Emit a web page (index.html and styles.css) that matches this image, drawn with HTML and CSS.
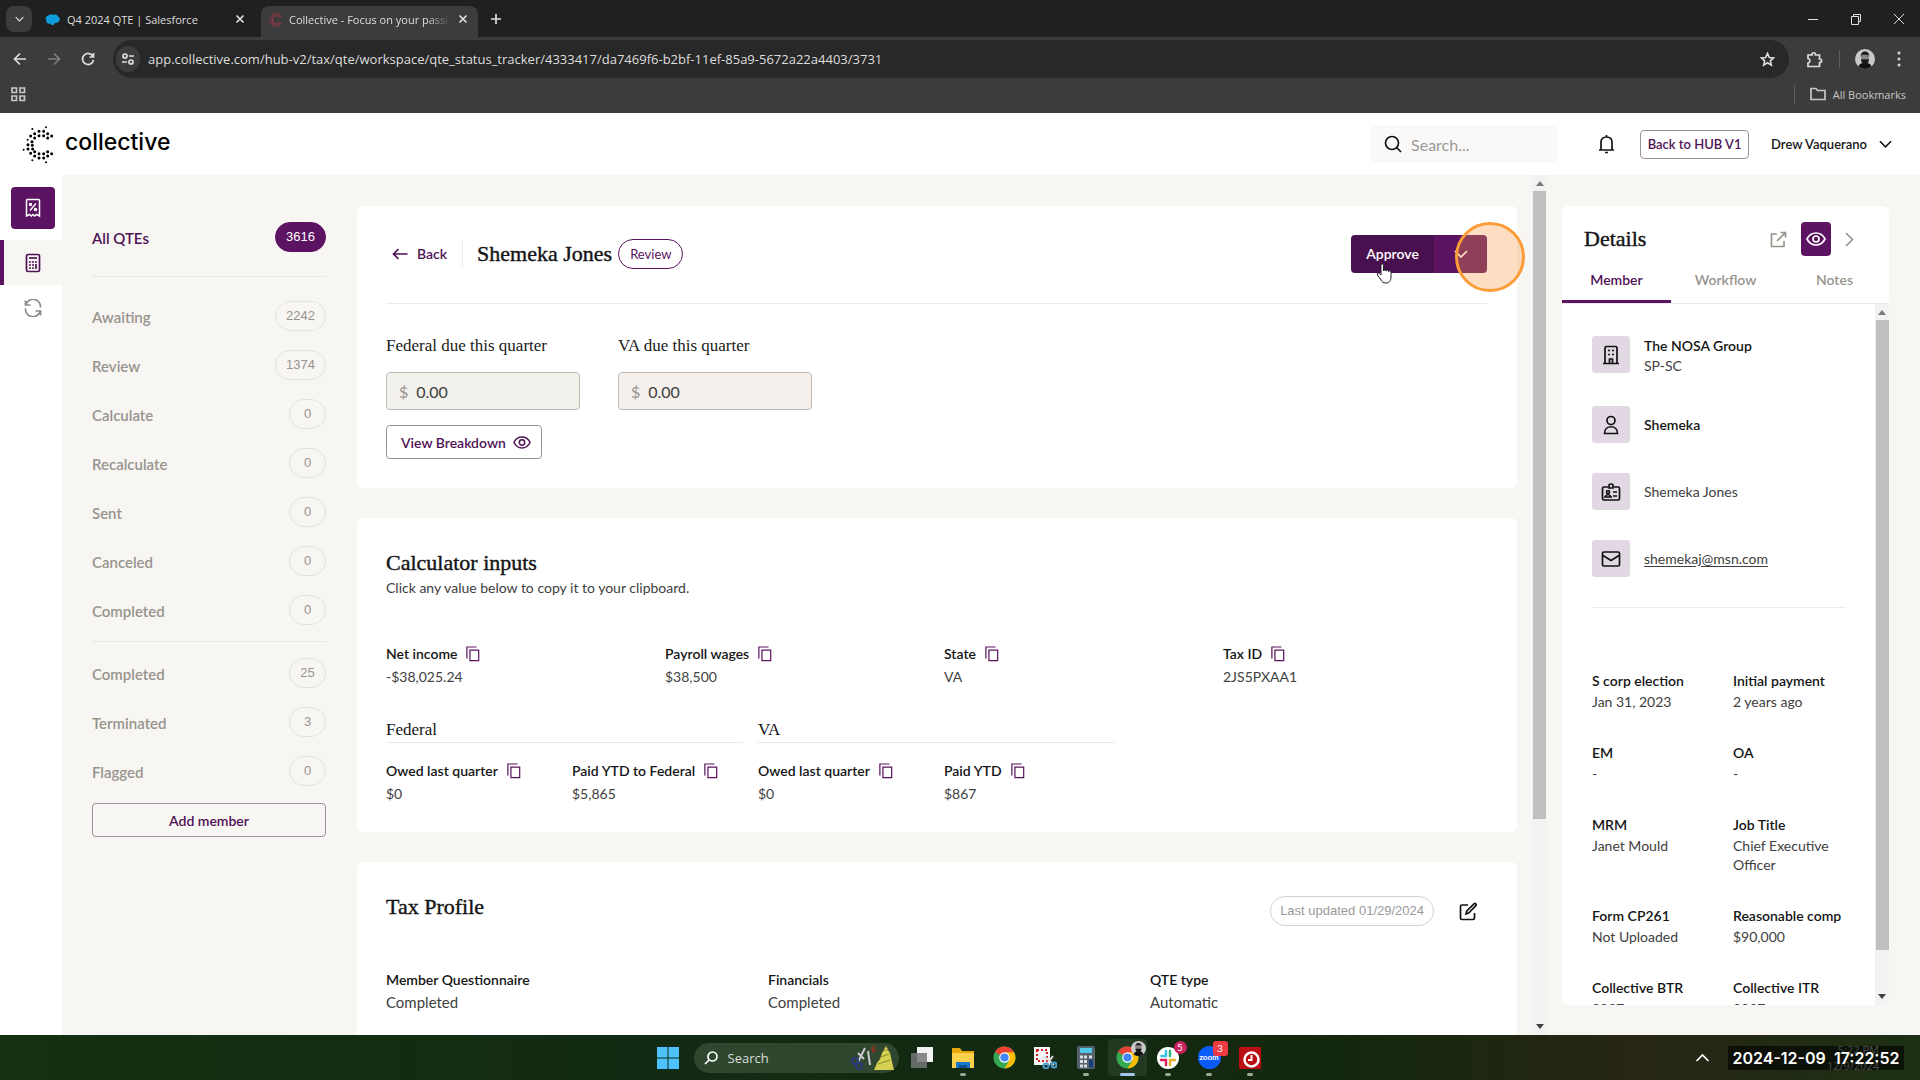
FILE: index.html
```html
<!DOCTYPE html>
<html lang="en">
<head>
  <meta charset="UTF-8">
  <meta name="viewport" content="width=device-width, initial-scale=1.0">
  <title>Collective - Focus on your passion</title>
  <link rel="stylesheet" href="styles.css">
</head>
<body>

  <!-- Shared icons -->
  <svg class="sprite" aria-hidden="true">
    <symbol id="copy" viewBox="0 0 16 18"><path d="M1 14V1h11M4.500 4.500h10v12h-10z"/></symbol>
    <symbol id="eye" viewBox="0 0 20 14"><path d="M1 7c2-4 5.200-6 9-6s7 2 9 6c-2 4-5.200 6-9 6S3 11 1 7z"/><circle cx="10" cy="7" r="3"/></symbol>
    <symbol id="close" viewBox="0 0 10 10"><path d="M1.500 1.500l7 7m0-7l-7 7"/></symbol>
    <symbol id="down" viewBox="0 0 14 8"><path d="M1 1l6 6 6-6"/></symbol>
    <symbol id="search" viewBox="0 0 18 18"><circle cx="8" cy="8" r="6.500"/><path d="M12.500 12.500L17 17"/></symbol>
    <symbol id="dots" viewBox="20 12 96 120">
      <path d="M51 30h0M92 25h0M37 62h0M25 92h0M51 124h0M92 130h0" stroke-width="6"/>
      <path d="M71 37h0M85 37h0M58 44h0M97 44h0M46 51h0M109 51h0M71 50h0M85 50h0M58 57h0M97 57h0M50 68h0M38 77h0M51 79h0M38 90h0M52 90h0M46 103h0M58 98h0M97 98h0M109 104h0M71 104h0M85 104h0M58 111h0M97 111h0M71 117h0M85 117h0" stroke-width="9"/>
    </symbol>
    <symbol id="face" viewBox="0 0 20 20">
      <circle cx="10" cy="10" r="10" fill="#c9c9c9"/>
      <path d="M3.500 17.500c1-3 3-3.500 6.500-3.500s5.500.5 6.500 3.500A10 10 0 0 1 10 20a10 10 0 0 1-6.500-2.500z" fill="#111"/>
      <ellipse cx="10" cy="8.500" rx="4" ry="5" fill="#8b8581"/>
      <path d="M5.800 8C5.500 4 7.500 2.500 10 2.500S14.500 4 14.200 8l-1-2.200H6.800zM6 9.500c1 1.500 2 .8 4 .8s3 .7 4-.8c0 4-1.500 6-4 6s-4-2-4-6z" fill="#1c1a19"/>
    </symbol>
    <symbol id="chrome" viewBox="0 0 24 24">
      <circle cx="12" cy="12" r="11.500" fill="#34a853"/>
      <path d="M12 12L2 6.300A11.500 11.500 0 0 1 22 6.500z" fill="#ea4335"/>
      <path d="M12 6.500h10A11.500 11.500 0 0 1 12 23.500l5-8.500z" fill="#fbbc04"/>
      <circle cx="12" cy="12" r="5.500" fill="#fff"/><circle cx="12" cy="12" r="4.300" fill="#4285f4"/>
    </symbol>
  </svg>

  <!-- Browser -->
  <header class="browser">
    <div class="tabs">
      <button class="tab-list" aria-label="Search tabs"><svg class="icon" width="9" height="6"><use href="#down"/></svg></button>
      <div class="tab">
        <svg width="15" height="13" viewBox="0 0 15 13"><path d="M3.500 2.500C5 .5 7 1 8 2c2-1 4-.5 5 1.500 2.500 1 2.500 5-.5 6-1 .8-2 .6-2.700.4C8.500 13 6 12.500 5.500 10.500 2.500 11.500.5 9 1.500 7-.3 5.500 1 3 3.500 2.500z" fill="#0d9dda"/></svg>
        <span class="tab-title">Q4 2024 QTE | Salesforce</span>
        <button class="tab-close" aria-label="Close tab"><svg class="icon" width="10" height="10"><use href="#close"/></svg></button>
      </div>
      <div class="tab current">
        <svg width="14" height="18" class="logo-dots red"><use href="#dots"/></svg>
        <span class="tab-title">Collective - Focus on your passi</span>
        <button class="tab-close" aria-label="Close tab"><svg class="icon" width="10" height="10"><use href="#close"/></svg></button>
      </div>
      <button class="new-tab" aria-label="New tab"><svg class="icon" width="12" height="12" viewBox="0 0 12 12"><path d="M6 1v10M1 6h10"/></svg></button>
      <div class="window-buttons">
        <button aria-label="Minimize"><svg class="icon thin" width="12" height="12" viewBox="0 0 12 12"><path d="M1 6.500h10"/></svg></button>
        <button aria-label="Restore"><svg class="icon thin" width="12" height="12" viewBox="0 0 12 12"><path d="M1.500 3.500h7v8h-7zM3.500 3V1.500h7v7H9"/></svg></button>
        <button aria-label="Close"><svg class="icon thin" width="12" height="12" viewBox="0 0 12 12"><path d="M1 1l10 10m0-10L1 11"/></svg></button>
      </div>
    </div>
    <div class="toolbar">
      <button aria-label="Back"><svg class="icon" width="14" height="14" viewBox="0 0 14 14"><path d="M13 7H2m5-5.500L1.500 7 7 12.500"/></svg></button>
      <button class="off" aria-label="Forward"><svg class="icon" width="14" height="14" viewBox="0 0 14 14"><path d="M1 7h11M7 1.500L12.500 7 7 12.500"/></svg></button>
      <button aria-label="Reload"><svg class="icon" width="14" height="14" viewBox="0 0 14 14"><path d="M12 4.500A5.500 5.500 0 1 0 12.500 8M12.500 1v4h-4"/></svg></button>
      <div class="address">
        <span class="site-info"><svg class="icon" width="14" height="14" viewBox="0 0 14 14"><circle cx="4" cy="4" r="2"/><circle cx="10" cy="10" r="2"/><path d="M8 4h5M1 10h5"/></svg></span>
        <input id="url" type="text" aria-label="Address" value="app.collective.com/hub-v2/tax/qte/workspace/qte_status_tracker/4333417/da7469f6-b2bf-11ef-85a9-5672a22a4403/3731">
        <button aria-label="Bookmark this tab"><svg class="icon" width="15" height="15" viewBox="0 0 16 16"><path d="M8 1.500l1.900 4.400 4.600.4-3.500 3.100 1.100 4.600L8 11.500 3.900 14 5 9.400 1.500 6.300l4.600-.4z"/></svg></button>
      </div>
      <button class="extensions" aria-label="Extensions"><svg class="icon" width="17" height="17" viewBox="0 0 17 17"><path d="M2 4h4c0-3 3.500-3 3.500 0h4v4c2.800 0 2.800 3.500 0 3.500V15.500H2V12c2.500-.5 2.500-4 0-4.500z"/></svg></button>
      <span class="bar"></span>
      <button aria-label="Profile"><svg width="20" height="20"><use href="#face"/></svg></button>
      <button class="more" aria-label="More"><svg width="4" height="16" viewBox="0 0 4 16" fill="#d5d5d5"><circle cx="2" cy="2" r="1.500"/><circle cx="2" cy="8" r="1.500"/><circle cx="2" cy="14" r="1.500"/></svg></button>
    </div>
    <div class="bookmarks">
      <svg class="icon" width="15" height="15" viewBox="0 0 15 15"><path d="M1 1h4.500v4.500H1zM9 1h4.500v4.500H9zM1 9h4.500v4.500H1zM9 9h4.500v4.500H9z"/></svg>
      <a href="#" class="all-bookmarks"><svg class="icon" width="16" height="14" viewBox="0 0 16 14"><path d="M1 12.500v-11h5l1.500 2H15v9z"/></svg>All Bookmarks</a>
    </div>
  </header>

  <!-- App header -->
  <div class="app-header">
    <a href="#" class="brand">
      <svg class="logo-dots" width="32" height="40"><use href="#dots"/></svg>
      collective
    </a>
    <label class="search-box"><svg class="icon" width="18" height="18"><use href="#search"/></svg><input type="text" placeholder="Search..." aria-label="Search"></label>
    <button class="bell" aria-label="Notifications"><svg class="icon" width="17" height="20" viewBox="0 0 17 20"><path d="M1 16h15M3 16V8.500C3 5 5 3 8.500 3S14 5 14 8.500V16M8.500 3V1M7 18.500h3"/></svg></button>
    <button class="btn back-v1">Back to HUB V1</button>
    <button class="user">Drew Vaquerano <svg class="icon" width="13" height="8"><use href="#down"/></svg></button>
  </div>

  <div class="app">
    <nav class="rail">
      <a href="#" class="rail-home" aria-label="Tax"><svg class="icon" width="16" height="20" viewBox="0 0 16 20"><path d="M1.500 18V2.500q0-1 1-1h11q1 0 1 1V18l-3-1.500-1.800 1.500L8 16.500 6.300 18l-1.800-1.500zM11 5.500l-6 7"/><circle cx="5.500" cy="6.500" r="1"/><circle cx="10.500" cy="11.500" r="1"/></svg></a>
      <a href="#" class="rail-item active" aria-label="Calculator"><svg class="icon" width="16" height="20" viewBox="0 0 16 20"><rect x="1.500" y="1.500" width="13" height="17" rx="1.500"/><path d="M4 5h8"/><path d="M4 9h8M4 12h5M4 15h5" stroke-dasharray="2 1"/><path d="M11 11v5"/></svg></a>
      <a href="#" class="rail-item" aria-label="Sync"><svg class="icon" width="18" height="18" viewBox="0 0 18 18"><path d="M1.500 1.500v4.500h5M1.800 5.800A7.500 7.500 0 0 1 16.500 8.500M16.500 16.500V12h-5M16.200 12.200A7.500 7.500 0 0 1 1.500 9.500"/></svg></a>
    </nav>

    <aside class="sidebar">
      <a href="#" class="status all">All QTEs <span>3616</span></a>
      <div class="group">
        <a href="#" class="status">Awaiting <span>2242</span></a>
        <a href="#" class="status">Review <span>1374</span></a>
        <a href="#" class="status">Calculate <span>0</span></a>
        <a href="#" class="status">Recalculate <span>0</span></a>
        <a href="#" class="status">Sent <span>0</span></a>
        <a href="#" class="status">Canceled <span>0</span></a>
        <a href="#" class="status">Completed <span>0</span></a>
      </div>
      <div class="group second">
        <a href="#" class="status">Completed <span>25</span></a>
        <a href="#" class="status">Terminated <span>3</span></a>
        <a href="#" class="status">Flagged <span>0</span></a>
      </div>
      <button class="btn add-member">Add member</button>
    </aside>

    <main class="main">
      <section class="card estimate">
        <div class="card-head">
          <a href="#" class="back"><svg class="icon" width="16" height="12" viewBox="0 0 16 12"><path d="M15.500 6H1.500m5-5l-5 5 5 5"/></svg>Back</a>
          <h1>Shemeka Jones</h1>
          <span class="pill">Review</span>
          <div class="approve">
            <button class="approve-main">Approve</button>
            <button class="approve-more" aria-label="More actions"><svg class="icon" width="14" height="8"><use href="#down"/></svg></button>
            <span class="click-ring"></span>
            <svg class="cursor" width="18" height="22" viewBox="0 0 18 22"><path d="M5 12V2.500c0-2 2.500-2 2.500 0V8c0-1.500 2.500-1.500 2.500 0 0-1.300 2.500-1.300 2.500.5 0-1 2.500-1 2.500 1V14c0 4-2 6-5 6-3 0-4-1-5-3l-3.500-5c-1-1.800.8-2.500 2-1.300z" fill="#fff" stroke="#222"/></svg>
          </div>
        </div>
        <div class="due">
          <div class="field">
            <label for="federal">Federal due this quarter</label>
            <div class="money"><span>$</span><input id="federal" type="text" value="0.00"></div>
          </div>
          <div class="field">
            <label for="va">VA due this quarter</label>
            <div class="money va"><span>$</span><input id="va" type="text" value="0.00"></div>
          </div>
        </div>
        <button class="btn breakdown">View Breakdown <svg class="icon" width="18" height="13"><use href="#eye"/></svg></button>
      </section>

      <section class="card inputs">
        <h2>Calculator inputs</h2>
        <p>Click any value below to copy it to your clipboard.</p>
        <div class="cols-4">
          <div class="value"><b>Net income <svg class="icon" width="14" height="16"><use href="#copy"/></svg></b>-$38,025.24</div>
          <div class="value"><b>Payroll wages <svg class="icon" width="14" height="16"><use href="#copy"/></svg></b>$38,500</div>
          <div class="value"><b>State <svg class="icon" width="14" height="16"><use href="#copy"/></svg></b>VA</div>
          <div class="value"><b>Tax ID <svg class="icon" width="14" height="16"><use href="#copy"/></svg></b>2JS5PXAA1</div>
        </div>
        <div class="cols-6">
          <h3>Federal</h3>
          <h3>VA</h3>
          <i></i>
          <div class="value"><b>Owed last quarter <svg class="icon" width="14" height="16"><use href="#copy"/></svg></b>$0</div>
          <div class="value"><b>Paid YTD to Federal <svg class="icon" width="14" height="16"><use href="#copy"/></svg></b>$5,865</div>
          <div class="value"><b>Owed last quarter <svg class="icon" width="14" height="16"><use href="#copy"/></svg></b>$0</div>
          <div class="value"><b>Paid YTD <svg class="icon" width="14" height="16"><use href="#copy"/></svg></b>$867</div>
        </div>
      </section>

      <section class="card profile">
        <div class="profile-head">
          <h2>Tax Profile</h2>
          <span class="updated">Last updated 01/29/2024</span>
          <button aria-label="Edit"><svg class="icon" width="19" height="19" viewBox="0 0 19 19"><path d="M9 3H3q-1.500 0-1.500 1.500V16q0 1.500 1.500 1.500h11q1.500 0 1.500-1.500v-5M7 12l.8-3L15 1.800q1-.8 1.800 0t0 1.900L9.700 11z"/></svg></button>
        </div>
        <div class="cols-3">
          <div class="value"><b>Member Questionnaire</b>Completed</div>
          <div class="value"><b>Financials</b>Completed</div>
          <div class="value"><b>QTE type</b>Automatic</div>
        </div>
      </section>
    </main>

    <div class="scrollbar main-scroll"><svg width="8" height="5" viewBox="0 0 8 5"><path d="M0 5l4-5 4 5z"/></svg><span></span><svg class="end" width="8" height="5" viewBox="0 0 8 5"><path d="M0 0l4 5 4-5z"/></svg></div>

    <aside class="details">
      <div class="details-head">
        <h2>Details</h2>
        <button aria-label="Open in new window"><svg class="icon" width="17" height="17" viewBox="0 0 17 17"><path d="M7 3H1.500v12.500H14V10M10.500 1.500h5v5M15 2L7 10"/></svg></button>
        <button class="watch" aria-label="Watch"><svg class="icon" width="20" height="14"><use href="#eye"/></svg></button>
        <button aria-label="Collapse"><svg class="icon" width="9" height="15" viewBox="0 0 9 15"><path d="M1 1l6.500 6.500L1 14"/></svg></button>
      </div>
      <div class="details-tabs">
        <a href="#" class="active">Member</a>
        <a href="#">Workflow</a>
        <a href="#">Notes</a>
      </div>
      <div class="details-body">
        <div class="details-content">
          <div class="contact"><span class="tile"><svg class="icon" width="18" height="20" viewBox="0 0 18 20"><path d="M1 18.500h16M3 18V3q0-1.500 1.500-1.500h9Q15 1.500 15 3v15M7.500 18v-4h3v4"/><path d="M6 5.500h6.500M6 9.500h6.500" stroke-dasharray="2 2"/></svg></span><div><b>The NOSA Group</b><br>SP-SC</div></div>
          <div class="contact"><span class="tile"><svg class="icon" width="16" height="20" viewBox="0 0 16 20"><circle cx="8" cy="5.500" r="4"/><path d="M1.500 18.500c0-9 13-9 13 0z"/></svg></span><b>Shemeka</b></div>
          <div class="contact"><span class="tile"><svg class="icon" width="20" height="18" viewBox="0 0 20 18"><path d="M7 4H3Q1.500 4 1.500 5.500v10Q1.500 17 3 17h14q1.500 0 1.500-1.500v-10Q18.500 4 17 4h-4M8 5V2.500q0-1.500 2-1.500t2 1.500V5zM12 9h4M12 13h4M4 14q3-5 6 0z"/><circle cx="7" cy="9" r="1.500"/></svg></span>Shemeka Jones</div>
          <div class="contact"><span class="tile"><svg class="icon" width="20" height="16" viewBox="0 0 20 16"><rect x="1.500" y="1" width="17" height="14" rx="1.500"/><path d="M2 4.500l8 5 8-5"/></svg></span><a href="mailto:shemekaj@msn.com">shemekaj@msn.com</a></div>
          <div class="facts">
            <div><b>S corp election</b>Jan 31, 2023</div>
            <div><b>Initial payment</b>2 years ago</div>
            <div><b>EM</b>-</div>
            <div><b>OA</b>-</div>
            <div><b>MRM</b>Janet Mould</div>
            <div><b>Job Title</b>Chief Executive Officer</div>
            <div><b>Form CP261</b>Not Uploaded</div>
            <div><b>Reasonable comp</b>$90,000</div>
            <div><b>Collective BTR</b>2027</div>
            <div><b>Collective ITR</b>2027</div>
          </div>
        </div>
        <div class="scrollbar details-scroll"><svg width="8" height="5" viewBox="0 0 8 5"><path d="M0 5l4-5 4 5z"/></svg><span></span><svg class="end" width="8" height="5" viewBox="0 0 8 5"><path d="M0 0l4 5 4-5z"/></svg></div>
      </div>
    </aside>
  </div>

  <!-- Taskbar -->
  <footer class="taskbar">
    <div class="task"><svg width="22" height="22" viewBox="0 0 22 22" fill="#4cc2ff"><path d="M0 0h10.500v10.500H0zM11.500 0H22v10.500H11.500zM0 11.500h10.500V22H0zM11.500 11.500H22V22H11.500z"/></svg></div>
    <label class="task-search">
      <svg class="icon" width="14" height="14" viewBox="0 0 14 14"><circle cx="8.500" cy="5.500" r="4.500"/><path d="M5 9l-4 4"/></svg>
      <input type="text" placeholder="Search" aria-label="Search Windows">
      <svg width="46" height="28" viewBox="0 0 46 28">
        <path d="M36 3l4 6 2 9 2 8H24l3-7 3-4 2-6z" fill="#d5cf52"/><path d="M36 2l2 4h-4zM28 20l12-4M31 13l8-3" fill="#f4ee8a" stroke="#8a8b2b"/>
        <path d="M8 18L15 4M8 9l6 6M18 7l2 14" stroke="#c9c9cf" stroke-width="2" fill="none"/>
        <circle cx="5" cy="17" r="3" fill="none" stroke="#2b3a78" stroke-width="2"/><circle cx="9" cy="22" r="3" fill="none" stroke="#2b3a78" stroke-width="2"/><path d="M21 4l5 3M24 1l-1 8" stroke="#8c3327" stroke-width="2"/>
      </svg>
    </label>
    <div class="task"><svg width="24" height="22" viewBox="0 0 24 22"><path d="M7 0h16v15H7z" fill="#f2f2f2"/><path d="M1 6h16v15H1z" fill="#777" opacity=".85"/></svg></div>
    <div class="task open"><svg width="24" height="22" viewBox="0 0 24 22"><path d="M1 1h8l2 3h12v17H1z" fill="#e8a50c"/><path d="M1 6h22v15H1z" fill="#ffd04c"/><path d="M5 15h14v6H5z" fill="#1976c9"/><path d="M8 18h8v3H8z" fill="#0e4f92"/></svg></div>
    <div class="task"><svg width="23" height="23"><use href="#chrome"/></svg></div>
    <div class="task"><svg width="24" height="22" viewBox="0 0 24 22"><path d="M1 0h16v18H1z" fill="#f6f6f6"/><path d="M4 3h10v11H4z" fill="none" stroke="#c22" stroke-width="2" stroke-dasharray="2 2"/><path d="M12 10l9 8M20 9l-6 8" stroke="#ddd" stroke-width="2"/><circle cx="21" cy="18" r="2.500" fill="none" stroke="#4a9fd0" stroke-width="2"/><circle cx="13" cy="19" r="2.500" fill="none" stroke="#4a9fd0" stroke-width="2"/></svg></div>
    <div class="task open"><svg width="18" height="23" viewBox="0 0 18 23"><rect width="18" height="23" rx="2" fill="#57616b"/><path d="M3 2h12v5H3z" fill="#52c8e8"/><path d="M3 11h8M3 15.500h8M3 20h8" stroke="#d7dde2" stroke-width="3" stroke-dasharray="3 1"/><path d="M12 9.500h3v3h-3z" fill="#d7dde2"/><path d="M12 13.500h4v8h-4z" fill="#16407c"/></svg></div>
    <div class="task open current"><svg width="23" height="23"><use href="#chrome"/></svg><svg class="badge-face" width="15" height="15"><use href="#face"/></svg></div>
    <div class="task open"><svg width="22" height="22" viewBox="0 0 22 22"><circle cx="11" cy="11" r="11" fill="#fff"/><g stroke-width="2.500" stroke-linecap="round"><path d="M9 4v5M4.500 9H9" stroke="#36c5f0"/><path d="M13 4v5" stroke="#2eb67d"/><path d="M13.500 13h4.500M13 13v5" stroke="#ecb22e"/><path d="M9 13v5M4 13h5" stroke="#e01e5a"/></g></svg><span class="badge round">5</span></div>
    <div class="task open"><span class="zoom-app">zoom</span><span class="badge">3</span></div>
    <div class="task open"><svg width="22" height="22" viewBox="0 0 22 22"><rect width="22" height="22" rx="1" fill="#b90e13"/><circle cx="12.500" cy="12.500" r="7" fill="none" stroke="#fff" stroke-width="2.500"/><path d="M12.500 8v5H9" fill="none" stroke="#fff" stroke-width="2"/></svg></div>
    <div class="tray">
      <svg class="icon" width="15" height="8" viewBox="0 0 14 8"><path d="M1 7l6-6 6 6"/></svg>
      <div class="tray-clock"><span>5:22 PM</span><span>12/9/2024</span></div>
      <time class="stamp">2024-12-09&nbsp; 17:22:52</time>
    </div>
  </footer>

</body>
</html>
```
FILE: styles.css
```css
* {
  box-sizing: border-box;
}
body {
  margin: 0;
  height: 100vh;
  display: flex;
  flex-direction: column;
  overflow: hidden;
  background-color: #f7f6f3;
  color: #404040;
  font-family: Lato, sans-serif;
  font-size: 14px;
  line-height: 19px;
}
button, input {
  font: inherit;
  color: inherit;
  background: none;
  border: 0;
  padding: 0;
  margin: 0;
}
button {
  display: flex;
  align-items: center;
  justify-content: center;
}
a {
  color: inherit;
  text-decoration: none;
}
b {
  font-weight: 600;
  color: #151515;
}
h1, h2, h3 {
  margin: 0;
  font-family: "Liberation Serif", serif;
  color: #151515;
}
h1, h2 {
  font-size: 22px;
  line-height: 26px;
  font-weight: normal;
  -webkit-text-stroke: 0.4px #151515;
}
.sprite {
  display: none;
}
.icon {
  flex: none;
  fill: none;
  stroke: currentColor;
  stroke-width: 1.7;
}
.icon.thin {
  stroke-width: 1;
}

/* Browser */
.browser {
  flex: none;
  background-color: #3c3c3c;
  color: #dedede;
  font-family: "Open Sans", sans-serif;
  font-size: 11px;
}
.tabs {
  display: flex;
  height: 37px;
  background-color: #202020;
}
.tab-list {
  width: 26px;
  height: 26px;
  margin: 6px 6px 0;
  border-radius: 8px;
  background-color: #3c3c3c;
}
.tab {
  display: flex;
  align-items: center;
  gap: 7px;
  width: 217px;
  height: 31px;
  margin-top: 6px;
  padding: 0 10px 5px 7px;
}
.tab.current {
  margin-left: 6px;
  background-color: #3c3c3c;
  border-radius: 8px 8px 0 0;
}
.tab-title {
  flex: 1;
  overflow: hidden;
  white-space: nowrap;
}
.tab.current .tab-title {
  mask-image: linear-gradient(to right, #000 85%, transparent);
}
.new-tab {
  width: 36px;
  height: 37px;
}
.window-buttons {
  display: flex;
  margin-left: auto;
}
.window-buttons button {
  width: 43px;
}
.toolbar {
  display: flex;
  align-items: center;
  height: 44px;
  padding-right: 4px;
}
.toolbar > button {
  width: 34px;
  height: 32px;
}
.toolbar > button:first-child {
  margin-left: 3px;
}
.toolbar .off {
  color: #7d7d7d;
}
.address {
  flex: 1;
  display: flex;
  align-items: center;
  height: 38px;
  margin-left: 8px;
  padding: 0 14px 0 3px;
  border-radius: 19px;
  background-color: #282828;
}
.site-info {
  display: flex;
  align-items: center;
  justify-content: center;
  width: 24px;
  height: 26px;
  margin-right: 8px;
  border-radius: 13px;
  background-color: #3c3c3c;
}
.address input {
  flex: 1;
  font-size: 13px;
}
.toolbar .extensions {
  width: 50px;
}
.bar {
  width: 1px;
  height: 18px;
  background-color: #5c5c5c;
}
.toolbar .extensions ~ button {
  width: 34px;
}
.toolbar .bar + button {
  margin-left: 8px;
}
.bookmarks {
  display: flex;
  align-items: center;
  justify-content: space-between;
  height: 32px;
  padding: 0 14px 6px 11px;
  color: #c7c7c7;
}
.all-bookmarks {
  display: flex;
  align-items: center;
  gap: 7px;
  padding-left: 15px;
  border-left: 1px solid #5c5c5c;
}

/* App header */
.app-header {
  flex: none;
  display: flex;
  align-items: center;
  height: 62px;
  padding: 0 28px 0 22px;
  background-color: #fff;
  color: #151515;
}
.brand {
  display: flex;
  align-items: center;
  gap: 11px;
  margin-right: auto;
  padding-bottom: 3px;
  font-family: Inter, sans-serif;
  font-size: 23px;
  font-weight: 500;
  color: #000;
}
.logo-dots {
  flex: none;
  fill: none;
  stroke: #000;
  stroke-linecap: round;
}
.logo-dots.red {
  stroke: #c8324f;
}
.search-box {
  display: flex;
  align-items: center;
  gap: 9px;
  width: 188px;
  height: 38px;
  margin-right: 40px;
  padding-left: 14px;
  background-color: #faf9f7;
}
.search-box input {
  width: 120px;
  font-size: 16px;
}
.search-box input::placeholder {
  color: #999;
}
.bell {
  margin-right: 25px;
}
.btn {
  height: 34px;
  border: 1px solid #9d8f9f;
  border-radius: 4px;
  color: #4f1355;
  font-weight: 600;
}
.back-v1 {
  width: 109px;
  height: 29px;
  font-size: 13px;
}
.user {
  gap: 12px;
  margin-left: 22px;
  font-size: 13px;
  font-weight: 600;
}

/* Layout */
.app {
  flex: 1;
  min-height: 0;
  display: flex;
}
.rail {
  flex: none;
  width: 62px;
  background-color: #fff;
}
.rail-home, .rail-item {
  display: flex;
  align-items: center;
  justify-content: center;
}
.rail-home {
  width: 44px;
  height: 42px;
  margin: 12px 0 11px 11px;
  border-radius: 4px;
  background-color: #5c1361;
  color: #fff;
}
.rail-home .icon {
  stroke-width: 1.5;
}
.rail-item {
  height: 45px;
  padding-left: 4px;
  color: #8f8b85;
}
.rail-item.active {
  padding-left: 0;
  border-left: 4px solid #5c1361;
  background-color: #f7f6f3;
  color: #4f1355;
}

.sidebar {
  flex: none;
  width: 264px;
  padding: 47px 0 0 30px;
}
.status {
  display: flex;
  justify-content: space-between;
  height: 30px;
  color: #98948d;
  font-size: 15px;
  font-weight: 600;
  line-height: 32px;
}
.status span {
  min-width: 37px;
  height: 30px;
  padding: 0 10px;
  border: 1px solid #e4e2de;
  border-radius: 15px;
  text-align: center;
  font: 13px/28px "Liberation Sans", sans-serif;
}
.status.all {
  color: #4f1355;
}
.status.all span {
  border-color: #5c1361;
  background-color: #5c1361;
  color: #fff;
}
.group {
  display: flex;
  flex-direction: column;
  gap: 19px;
  margin-top: 24px;
  padding-top: 24px;
  border-top: 1px solid #eae8e4;
}
.group.second {
  margin-top: 16px;
  padding-top: 16px;
}
.add-member {
  width: 100%;
  margin-top: 17px;
}

.main {
  flex: 1;
  padding: 31px 15px 0 31px;
  overflow: hidden;
}
.card {
  margin-bottom: 30px;
  padding: 29px 30px 29px 29px;
  border-radius: 6px;
  background-color: #fff;
}
.card-head {
  display: flex;
  align-items: center;
  height: 98px;
  margin-top: -29px;
  padding-bottom: 2px;
  border-bottom: 1px solid #e9ecec;
}
.back {
  display: flex;
  align-items: center;
  gap: 9px;
  height: 28px;
  padding: 0 15px 0 6px;
  margin-right: 14px;
  border-right: 1px solid #ececec;
  color: #4f1355;
  font-weight: 600;
}
.pill {
  margin-left: 6px;
  padding: 0 11px;
  border: 1px solid #5c1361;
  border-radius: 15px;
  color: #5c1361;
  font-size: 13px;
  line-height: 28px;
}
.approve {
  position: relative;
  display: flex;
  height: 38px;
  margin-left: auto;
  color: #fff;
  font-weight: 600;
}
.approve-main {
  width: 83px;
  border-radius: 4px 0 0 4px;
  background-color: #48104e;
}
.approve-more {
  width: 53px;
  border-radius: 0 4px 4px 0;
  background-color: #5c1361;
}
.click-ring {
  position: absolute;
  top: -13px;
  right: -38px;
  width: 70px;
  height: 70px;
  border: 3px solid #fc9c38;
  border-radius: 50%;
  background-color: rgba(250, 155, 70, 0.33);
}
.cursor {
  position: absolute;
  top: 28px;
  left: 25px;
}
.due {
  display: flex;
  gap: 38px;
  padding: 28px 0 15px;
}
.field {
  width: 194px;
}
.field label {
  display: block;
  margin-bottom: 12px;
  color: #202020;
  font: 17px/28px "Liberation Serif", serif;
}
.money {
  display: flex;
  align-items: center;
  gap: 8px;
  height: 38px;
  padding: 0 12px;
  border: 1px solid #bdbcb8;
  border-radius: 4px;
  background-color: #f3f1eb;
  font-size: 16px;
}
.money.va {
  background-color: #f5f0eb;
}
.money span {
  color: #98948d;
}
.money input {
  flex: 1;
  min-width: 0;
}
.breakdown {
  gap: 7px;
  padding: 0 10px 0 14px;
}
.inputs {
  padding-top: 32px;
}
.inputs p {
  margin: 2px 0 47px;
}
.cols-4, .cols-6, .cols-3 {
  display: grid;
  grid-template-columns: repeat(4, 1fr);
  gap: 0 15px;
}
.value b {
  display: flex;
  align-items: center;
  gap: 9px;
  margin-bottom: 4px;
}
.value .icon {
  color: #5c1361;
  stroke-width: 1.4;
}
.cols-6 {
  grid-template-columns: repeat(6, 1fr);
  margin-top: 31px;
}
.cols-6 h3 {
  grid-column: span 2;
  margin-bottom: 18px;
  border-bottom: 1px solid #e9e9e9;
  font-size: 17px;
  font-weight: normal;
  line-height: 25px;
}
.cols-6 i {
  grid-column: span 2;
}
.profile {
  padding-top: 34px;
}
.profile-head {
  display: flex;
  align-items: center;
  height: 30px;
}
.profile-head h2 {
  margin: 0 auto 8px 0;
}
.updated {
  padding: 0 9px;
  margin-right: 25px;
  border: 1px solid #d2d2d2;
  border-radius: 15px;
  color: #9a9a9a;
  font: 13px/28px "Liberation Sans", sans-serif;
}
.profile-head button {
  margin-right: 9px;
  color: #111;
}
.cols-3 {
  grid-template-columns: repeat(3, 1fr);
  gap: 0 45px;
  margin-top: 44px;
}
.cols-3 .value {
  font-size: 15px;
}
.cols-3 b {
  font-size: 14px;
}

/* Scrollbars are drawn, the panes do not scroll */
.scrollbar {
  flex: none;
  display: flex;
  flex-direction: column;
  align-items: center;
  width: 15px;
  background-color: #f2f2f2;
}
.scrollbar span {
  width: 13px;
  margin-top: 5px;
  background-color: #c0bfc0;
}
.scrollbar svg {
  flex: none;
  fill: #7a7a7a;
}
.scrollbar .end {
  margin-top: auto;
  fill: #404040;
}
.main-scroll {
  padding: 6px 0;
}
.main-scroll span {
  height: 74%;
}

/* Details */
.details {
  flex: none;
  display: flex;
  flex-direction: column;
  width: 327px;
  margin: 31px 31px 30px 15px;
  border-radius: 6px;
  background-color: #fff;
  overflow: hidden;
}
.details-head {
  display: flex;
  align-items: center;
  gap: 14px;
  padding: 16px 35px 0 22px;
  color: #98948d;
}
.details-head h2 {
  margin-right: auto;
}
.details-head .watch {
  width: 30px;
  height: 34px;
  border-radius: 4px;
  background-color: #5c1361;
  color: #fff;
}
.details-tabs {
  display: flex;
  height: 48px;
  border-bottom: 1px solid #e9e9e9;
  color: #98948d;
  font-weight: 600;
  line-height: 48px;
}
.details-tabs a {
  flex: 1;
  text-align: center;
}
.details-tabs .active {
  border-bottom: 3px solid #5c1361;
  color: #4f1355;
}
.details-body {
  flex: 1;
  min-height: 0;
  display: flex;
}
.details-content {
  flex: 1;
  padding: 32px 29px 0 30px;
}
.contact {
  display: flex;
  align-items: center;
  gap: 14px;
  margin-bottom: 30px;
  line-height: 20px;
}
.contact:first-child {
  align-items: flex-start;
  height: 40px;
}
.contact .icon {
  color: #111;
}
.contact a {
  text-decoration: underline;
  text-underline-offset: 2px;
}
.tile {
  display: flex;
  align-items: center;
  justify-content: center;
  width: 38px;
  height: 37px;
  border-radius: 3px;
  background-color: #e2d8e4;
}
.facts {
  display: grid;
  grid-template-columns: 109px 109px;
  gap: 32px;
  padding-top: 63px;
  border-top: 1px solid #ececec;
}
.facts b {
  display: block;
  margin-bottom: 2px;
  white-space: nowrap;
}
.details-scroll {
  width: 14px;
  padding: 6px 0;
}
.details-scroll span {
  height: 91.5%;
}

/* Taskbar */
.taskbar {
  position: relative;
  flex: none;
  display: flex;
  justify-content: center;
  align-items: center;
  height: 45px;
  background: linear-gradient(to right, #14300f, #122a13 35%, #14280f 70%, #272514 85%, #1c3013);
  color: #fff;
}
.task {
  position: relative;
  display: flex;
  align-items: center;
  justify-content: center;
  width: 39px;
  height: 37px;
  margin-right: 2px;
  border-radius: 4px;
}
.task.current {
  background-color: #233a22;
}
.task.open::after {
  content: "";
  position: absolute;
  bottom: 0;
  width: 6px;
  height: 3px;
  border-radius: 2px;
  background-color: #9aa896;
}
.task.current::after {
  width: 15px;
  background-color: #a5c8ee;
}
.task-search {
  display: flex;
  align-items: center;
  gap: 10px;
  width: 205px;
  height: 30px;
  margin: 0 4px;
  padding: 0 3px 0 10px;
  border-radius: 15px;
  background-color: #2f462f;
  font: 13px "Open Sans", sans-serif;
}
.task-search input {
  flex: 1;
  min-width: 0;
}
.task-search input::placeholder {
  color: #d8ddd6;
}
.badge, .badge-face {
  position: absolute;
  top: 2px;
  right: 1px;
}
.badge {
  width: 15px;
  border-radius: 3px;
  background-color: #ee3a43;
  font-size: 10px;
  line-height: 15px;
  text-align: center;
}
.badge.round {
  width: 13px;
  border-radius: 7px;
  background-color: #c8215b;
  line-height: 13px;
}
.zoom-app {
  width: 23px;
  border-radius: 50%;
  background-color: #0b5cff;
  font-size: 8px;
  font-weight: bold;
  line-height: 23px;
  text-align: center;
}
.tray {
  position: absolute;
  right: 16px;
  display: flex;
  align-items: center;
  gap: 18px;
}
.tray-clock {
  position: absolute;
  right: 25px;
  display: flex;
  flex-direction: column;
  color: #b4bab0;
  font: 11px/16px "Open Sans", sans-serif;
  text-align: right;
}
.stamp {
  position: relative;
  width: 176px;
  background-color: rgba(0, 0, 0, 0.6);
  font: 600 16px/24px Inter, sans-serif;
  text-align: center;
}
```
